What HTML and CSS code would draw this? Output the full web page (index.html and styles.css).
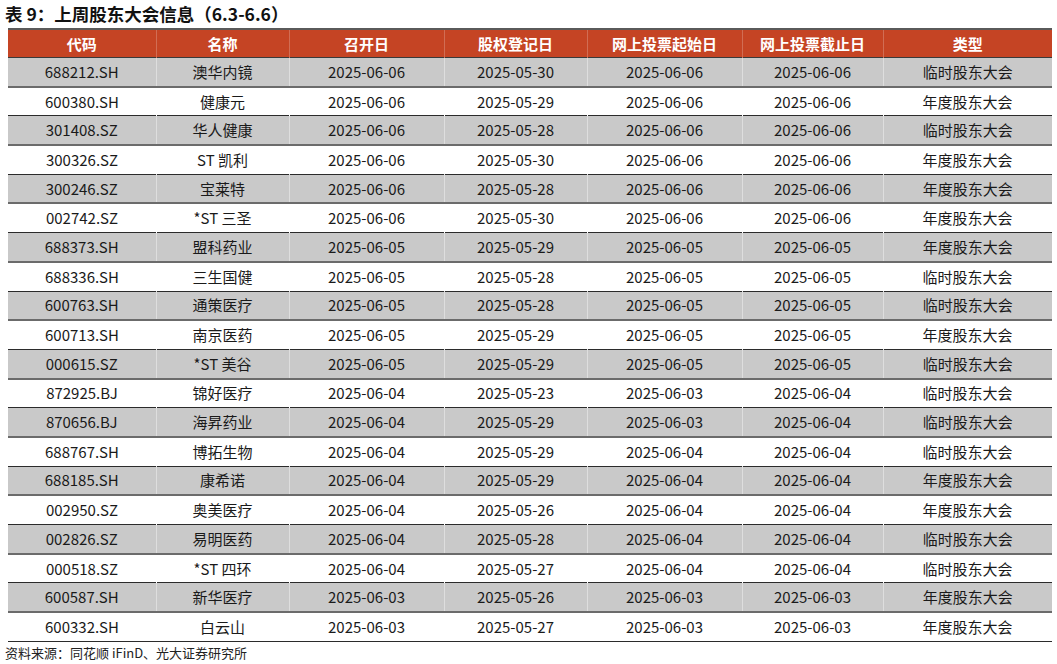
FILE: index.html
```html
<!DOCTYPE html>
<html lang="zh">
<head>
<meta charset="utf-8">
<title>表 9：上周股东大会信息</title>
<link rel="stylesheet" href="styles.css">
</head>
<body>
<div class="title">表 9：上周股东大会信息（6.3-6.6）</div>
<table class="grid">
  <colgroup>
    <col class="c1"><col class="c2"><col class="c3"><col class="c4"><col class="c5"><col class="c6"><col class="c7">
  </colgroup>
  <thead>
    <tr><th>代码</th><th>名称</th><th>召开日</th><th>股权登记日</th><th>网上投票起始日</th><th>网上投票截止日</th><th>类型</th></tr>
  </thead>
  <tbody>
    <tr class="g"><td>688212.SH</td><td>澳华内镜</td><td>2025-06-06</td><td>2025-05-30</td><td>2025-06-06</td><td>2025-06-06</td><td>临时股东大会</td></tr>
    <tr><td>600380.SH</td><td>健康元</td><td>2025-06-06</td><td>2025-05-29</td><td>2025-06-06</td><td>2025-06-06</td><td>年度股东大会</td></tr>
    <tr class="g"><td>301408.SZ</td><td>华人健康</td><td>2025-06-06</td><td>2025-05-28</td><td>2025-06-06</td><td>2025-06-06</td><td>临时股东大会</td></tr>
    <tr><td>300326.SZ</td><td>ST 凯利</td><td>2025-06-06</td><td>2025-05-30</td><td>2025-06-06</td><td>2025-06-06</td><td>年度股东大会</td></tr>
    <tr class="g"><td>300246.SZ</td><td>宝莱特</td><td>2025-06-06</td><td>2025-05-28</td><td>2025-06-06</td><td>2025-06-06</td><td>年度股东大会</td></tr>
    <tr><td>002742.SZ</td><td>*ST 三圣</td><td>2025-06-06</td><td>2025-05-30</td><td>2025-06-06</td><td>2025-06-06</td><td>年度股东大会</td></tr>
    <tr class="g"><td>688373.SH</td><td>盟科药业</td><td>2025-06-05</td><td>2025-05-29</td><td>2025-06-05</td><td>2025-06-05</td><td>年度股东大会</td></tr>
    <tr><td>688336.SH</td><td>三生国健</td><td>2025-06-05</td><td>2025-05-28</td><td>2025-06-05</td><td>2025-06-05</td><td>临时股东大会</td></tr>
    <tr class="g"><td>600763.SH</td><td>通策医疗</td><td>2025-06-05</td><td>2025-05-28</td><td>2025-06-05</td><td>2025-06-05</td><td>临时股东大会</td></tr>
    <tr><td>600713.SH</td><td>南京医药</td><td>2025-06-05</td><td>2025-05-29</td><td>2025-06-05</td><td>2025-06-05</td><td>年度股东大会</td></tr>
    <tr class="g"><td>000615.SZ</td><td>*ST 美谷</td><td>2025-06-05</td><td>2025-05-29</td><td>2025-06-05</td><td>2025-06-05</td><td>临时股东大会</td></tr>
    <tr><td>872925.BJ</td><td>锦好医疗</td><td>2025-06-04</td><td>2025-05-23</td><td>2025-06-03</td><td>2025-06-04</td><td>临时股东大会</td></tr>
    <tr class="g"><td>870656.BJ</td><td>海昇药业</td><td>2025-06-04</td><td>2025-05-29</td><td>2025-06-03</td><td>2025-06-04</td><td>临时股东大会</td></tr>
    <tr><td>688767.SH</td><td>博拓生物</td><td>2025-06-04</td><td>2025-05-29</td><td>2025-06-04</td><td>2025-06-04</td><td>临时股东大会</td></tr>
    <tr class="g"><td>688185.SH</td><td>康希诺</td><td>2025-06-04</td><td>2025-05-29</td><td>2025-06-04</td><td>2025-06-04</td><td>年度股东大会</td></tr>
    <tr><td>002950.SZ</td><td>奥美医疗</td><td>2025-06-04</td><td>2025-05-26</td><td>2025-06-04</td><td>2025-06-04</td><td>年度股东大会</td></tr>
    <tr class="g"><td>002826.SZ</td><td>易明医药</td><td>2025-06-04</td><td>2025-05-28</td><td>2025-06-04</td><td>2025-06-04</td><td>临时股东大会</td></tr>
    <tr><td>000518.SZ</td><td>*ST 四环</td><td>2025-06-04</td><td>2025-05-27</td><td>2025-06-04</td><td>2025-06-04</td><td>临时股东大会</td></tr>
    <tr class="g"><td>600587.SH</td><td>新华医疗</td><td>2025-06-03</td><td>2025-05-26</td><td>2025-06-03</td><td>2025-06-03</td><td>年度股东大会</td></tr>
    <tr><td>600332.SH</td><td>白云山</td><td>2025-06-03</td><td>2025-05-27</td><td>2025-06-03</td><td>2025-06-03</td><td>年度股东大会</td></tr>
  </tbody>
</table>
<div class="source">资料来源：同花顺 iFinD、光大证券研究所</div>
</body>
</html>
```

FILE: styles.css
```css
html, body {
  margin: 0;
  padding: 0;
  background: #ffffff;
}
body {
  font-family: "Noto Sans CJK SC", "Noto Sans", sans-serif;
  color: #1a1a1a;
}
.title {
  height: 28px;
  line-height: 28px;
  padding-left: 5px;
  font-size: 17.5px;
  font-weight: 700;
  color: #111;
}
.grid {
  margin-left: 8px;
  width: 1044px;
  table-layout: fixed;
  border-collapse: collapse;
}
.c1 { width: 148px; }
.c2 { width: 133px; }
.c3 { width: 155px; }
.c4 { width: 143px; }
.c5 { width: 155px; }
.c6 { width: 141px; }
.c7 { width: 169px; }
.grid th, .grid td {
  padding: 0;
  text-align: center;
  white-space: nowrap;
  font-size: 15px;
  line-height: 20px;
}
.grid thead tr {
  background: #c54424;
  border-top: 2px solid #5a5a5a;
  border-bottom: 1px solid #3a3a3a;
}
.grid th {
  height: 27px;
  color: #ffffff;
  font-weight: 700;
  border-left: 1px solid rgba(255, 255, 255, 0.22);
}
.grid th:first-child { border-left: none; }
.grid td {
  height: 27.7px;
}
.grid tbody tr {
  border-bottom: 1px solid #2b2b2b;
}
.grid tbody tr.g {
  background: #c9c9c9;
  border-bottom: 2px solid #6b6b6b;
}
.grid tbody tr.g td {
  border-left: 1px solid rgba(255, 255, 255, 0.4);
}
.grid tbody tr.g td:first-child { border-left: none; }
.source {
  padding-left: 5px;
  height: 22px;
  line-height: 22px;
  font-size: 13px;
  color: #222;
}
```
